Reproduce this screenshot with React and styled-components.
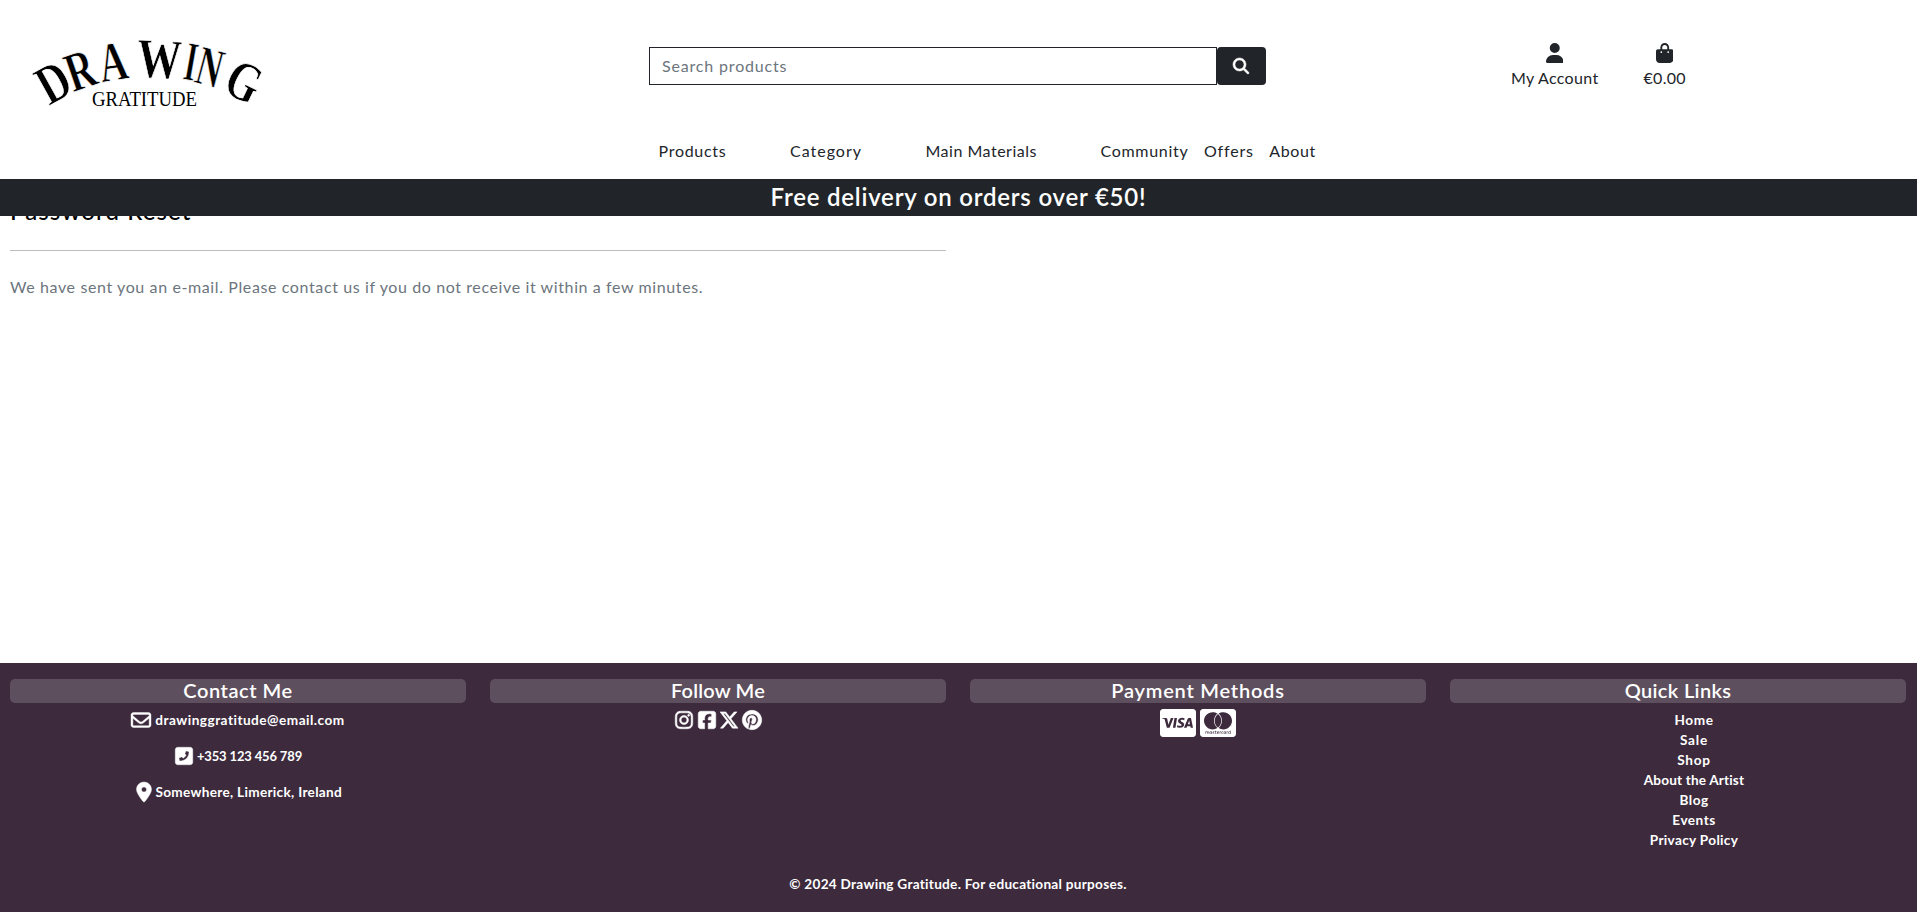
import React from 'react';
import styled, { createGlobalStyle } from 'styled-components';
import {
  FaMagnifyingGlass,
  FaUser,
  FaBagShopping,
  FaRegEnvelope,
  FaSquarePhoneFlip,
  FaLocationDot,
  FaInstagram,
  FaSquareFacebook,
  FaXTwitter,
  FaPinterest,
  FaCcVisa,
  FaCcMastercard,
} from 'react-icons/fa6';

const GlobalStyle = createGlobalStyle`
  *, *::before, *::after { box-sizing: border-box; }
  body {
    margin: 0;
    background: #fff;
    color: #212529;
    font-family: Lato, "Open Sans", sans-serif;
    font-size: 16px;
    line-height: 24px;
    overflow: hidden;
  }
  a { color: inherit; text-decoration: none; }
  svg { display: block; flex-shrink: 0; }
`;

const Page = styled.div`
  display: flex;
  flex-direction: column;
  height: 912px;
`;

const Header = styled.header`
  position: relative;
  z-index: 1;
  flex-shrink: 0;
  background: #fff;
`;

const TopRow = styled.div`
  display: grid;
  grid-template-columns: 649px 617px 1fr;
  align-items: center;
  height: 132px;
`;

const LogoArt = styled.svg`
  width: 290px;
  height: 132px;
  font-family: "Liberation Serif", serif;
  fill: #000;
`;

const SearchForm = styled.form`
  display: flex;
  height: 38px;
`;

const SearchInput = styled.input`
  flex: 1;
  min-width: 0;
  padding: 6px 12px;
  border: 1px solid #212529;
  border-radius: 0;
  background: #fff;
  font: inherit;
  letter-spacing: 0.83px;
  &::placeholder { color: #6c757d; opacity: 1; }
`;

const SearchButton = styled.button`
  display: flex;
  align-items: center;
  justify-content: center;
  width: 49px;
  padding: 0 2px 0 0;
  border: 0;
  border-radius: 4px;
  background: #212529;
  color: #fff;
  font-size: 16px;
  svg { stroke: currentColor; stroke-width: 16px; overflow: visible; }
`;

const Actions = styled.div`
  display: flex;
  gap: 45px;
  padding: 1px 0 0 245px;
`;

const Action = styled.a`
  display: flex;
  flex-direction: column;
  align-items: center;
  gap: 3px;
  letter-spacing: 0.32px;
  svg { width: 17.5px; height: 20px; }
`;

const Nav = styled.nav`
  display: flex;
  gap: 15.5px;
  height: 47px;
  padding: 7px 0 0 658.5px;
`;

const NavLink = styled.a`
  padding-right: ${(p) => (p.$menu ? '48px' : 0)};
  letter-spacing: ${(p) => p.$track}px;
`;

const Banner = styled.div`
  height: 37px;
  background: #212529;
  color: #fff;
  font-size: 24px;
  font-weight: 600;
  line-height: 36px;
  letter-spacing: 0.78px;
  text-align: center;
`;

const Main = styled.main`
  flex: 1;
  width: 956px;
  margin-top: -20px;
  padding: 0 10px;
`;

const Title = styled.h2`
  margin: 0;
  color: #000;
  font-size: 24px;
  font-weight: 500;
  line-height: 29px;
  letter-spacing: 1.1px;
`;

const Rule = styled.hr`
  margin: 25px 0 24px;
  border: 0;
  border-top: 1px solid #bcbcbc;
`;

const Message = styled.p`
  margin: 0;
  color: #6c757d;
  letter-spacing: 0.61px;
`;

const Footer = styled.footer`
  display: flex;
  flex-direction: column;
  flex-shrink: 0;
  height: 249px;
  padding: 16px 11px 0 10px;
  background: #3d2b3d;
  color: #fff;
  font-size: 13.6px;
  font-weight: 700;
  line-height: 20px;
`;

const Columns = styled.div`
  display: grid;
  grid-template-columns: repeat(4, 456px);
  gap: 24px;
  height: 192px;
`;

const Column = styled.section`
  display: flex;
  flex-direction: column;
  align-items: center;
`;

const ColumnTitle = styled.h3`
  align-self: stretch;
  height: 24px;
  margin: 0;
  border-radius: 5px;
  background: #5e4f5e;
  font-size: 20px;
  font-weight: 600;
  line-height: 23px;
  letter-spacing: ${(p) => p.$track}px;
  text-align: center;
`;

const ContactList = styled.div`
  display: flex;
  flex-direction: column;
  align-items: center;
  gap: 16px;
  padding-top: 7px;
`;

const ContactLine = styled.a`
  display: flex;
  align-items: center;
  gap: ${(p) => p.$gap}px;
  height: 20px;
  font-size: ${(p) => p.$size || 13.6}px;
  letter-spacing: ${(p) => p.$track}px;
  svg {
    height: 20px;
    width: auto;
    overflow: visible;
    stroke: currentColor;
    stroke-width: 10px;
  }
`;

const Socials = styled.div`
  display: flex;
  align-items: center;
  gap: 2.5px;
  height: 20px;
  margin-top: 7px;
  svg {
    height: 20px;
    width: auto;
    overflow: visible;
    stroke: currentColor;
    stroke-width: 14px;
  }
`;

const Cards = styled.div`
  display: flex;
  gap: 4.6px;
  margin-top: 4px;
  svg { width: 36px; height: 32px; }
`;

const Links = styled.ul`
  align-self: stretch;
  margin: 7px 0 0;
  padding: 0 0 0 32px;
  list-style: none;
  text-align: center;
`;

const LinkItem = styled.li`
  letter-spacing: ${(p) => p.$track}px;
`;

const Copyright = styled.p`
  margin: 2.5px 0 0;
  letter-spacing: 0.28px;
  text-align: center;
`;

const arc = [
  ['D', 49, 106, -29, 0.76],
  ['R', 73, 92.5, -19, 0.7],
  ['A', 102, 82.5, -9, 0.7],
  ['W', 136, 76.5, 3, 0.8],
  ['I', 182, 79, 10, 0.55],
  ['N', 193, 82, 15, 0.62],
  ['G', 221, 91, 26, 0.76],
];

function Logo() {
  return (
    <LogoArt viewBox="0 0 290 132" role="img" aria-label="Drawing Gratitude">
      {arc.map(([letter, x, y, turn, stretch]) => (
        <text
          key={letter}
          fontSize="56"
          fontWeight="700"
          stroke="#fff"
          strokeWidth="0.7"
          transform={`translate(${x} ${y}) rotate(${turn}) scale(${stretch} 1)`}
        >
          {letter}
        </text>
      ))}
      <text x="92" y="106.3" fontSize="21.5" textLength="105" lengthAdjust="spacingAndGlyphs">
        GRATITUDE
      </text>
    </LogoArt>
  );
}

const navItems = [
  ['Products', 0.72, true],
  ['Category', 1, true],
  ['Main Materials', 0.51, true],
  ['Community', 0.7, false],
  ['Offers', 0.85, false],
  ['About', 0.6, false],
];

const quickLinks = [
  ['Home', 0.6],
  ['Sale', 0.8],
  ['Shop', 0.7],
  ['About the Artist', 0.16],
  ['Blog', 0.5],
  ['Events', 0.5],
  ['Privacy Policy', 0.33],
];

export default function App() {
  return (
    <>
      <GlobalStyle />
      <Page>
        <Header>
          <TopRow>
            <Logo />
            <SearchForm>
              <SearchInput placeholder="Search products" />
              <SearchButton type="button" aria-label="Search">
                <FaMagnifyingGlass />
              </SearchButton>
            </SearchForm>
            <Actions>
              <Action href="#"><FaUser />My Account</Action>
              <Action href="#"><FaBagShopping />€0.00</Action>
            </Actions>
          </TopRow>
          <Nav>
            {navItems.map(([label, track, menu]) => (
              <NavLink key={label} href="#" $track={track} $menu={menu}>{label}</NavLink>
            ))}
          </Nav>
          <Banner>Free delivery on orders over €50!</Banner>
        </Header>
        <Main>
          <Title>Password Reset</Title>
          <Rule />
          <Message>
            We have sent you an e-mail. Please contact us if you do not receive it within a few minutes.
          </Message>
        </Main>
        <Footer>
          <Columns>
            <Column>
              <ColumnTitle $track={0.55}>Contact Me</ColumnTitle>
              <ContactList>
                <ContactLine href="#" $gap={4} $track={0.49}>
                  <FaRegEnvelope />drawinggratitude@email.com
                </ContactLine>
                <ContactLine href="#" $gap={3} $size={13} $track={-0.15}>
                  <FaSquarePhoneFlip />+353 123 456 789
                </ContactLine>
                <ContactLine href="#" $gap={1.5} $track={0.31}>
                  <FaLocationDot />Somewhere, Limerick, Ireland
                </ContactLine>
              </ContactList>
            </Column>
            <Column>
              <ColumnTitle $track={0.2}>Follow Me</ColumnTitle>
              <Socials>
                <FaInstagram />
                <FaSquareFacebook />
                <FaXTwitter />
                <FaPinterest />
              </Socials>
            </Column>
            <Column>
              <ColumnTitle $track={0.78}>Payment Methods</ColumnTitle>
              <Cards>
                <FaCcVisa />
                <FaCcMastercard />
              </Cards>
            </Column>
            <Column>
              <ColumnTitle $track={0.35}>Quick Links</ColumnTitle>
              <Links>
                {quickLinks.map(([label, track]) => (
                  <LinkItem key={label} $track={track}><a href="#">{label}</a></LinkItem>
                ))}
              </Links>
            </Column>
          </Columns>
          <Copyright>© 2024 Drawing Gratitude. For educational purposes.</Copyright>
        </Footer>
      </Page>
    </>
  );
}
